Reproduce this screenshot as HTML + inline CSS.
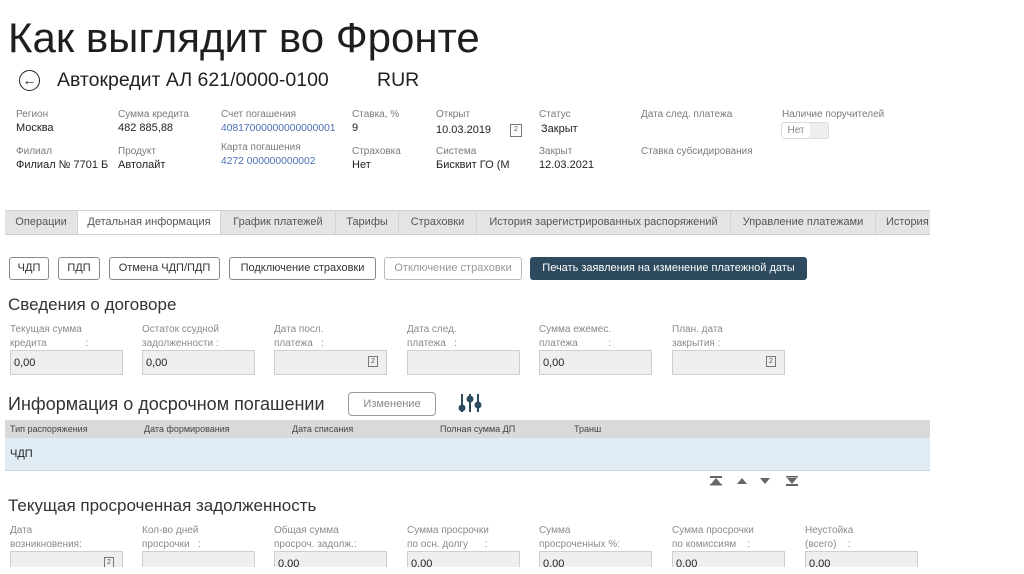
<!DOCTYPE html>
<html><head><meta charset="utf-8"><style>
body{margin:0;width:1024px;height:574px;overflow:hidden;background:#fff;font-family:"Liberation Sans",sans-serif;position:relative;color:#222}
.a{position:absolute;white-space:nowrap}
.l{font-size:10px;color:#7a7a7a}
.v{font-size:11px;color:#222}
.lk{font-size:10.3px;color:#4a6fb5}
.tabs{position:absolute;left:5px;top:210px;width:925px;height:23px;background:#e4e4e4;border-top:1px solid #cfcfcf;border-bottom:1px solid #cfcfcf;font-size:11px;color:#555}
.tab{position:absolute;top:0;height:23px;line-height:23px;border-right:1px solid #d2d2d2;text-align:center}
.btn{position:absolute;top:257px;line-height:21px;border:1px solid #8a8a8a;border-radius:3px;font-size:11px;color:#333;text-align:center;box-sizing:border-box;height:23px}
.h{font-size:17px;color:#333}
.in{position:absolute;width:113px;height:25px;background:#efefef;border:1px solid #cfcfcf;box-sizing:border-box;font-size:11px;line-height:24px;padding-left:3px}
.cal{position:absolute;right:8px;top:5px;width:10px;height:11px;border:1px solid #777;font-size:7px;line-height:10px;text-align:center;color:#555;box-sizing:border-box}
.fl{font-size:10px;color:#8a8a8a;line-height:14px}
</style></head><body>
<div class="a" style="left:8px;top:14px;font-size:42px;color:#1e1e1e">Как выглядит во Фронте</div>
<div class="a" style="left:19px;top:70px;width:19px;height:19px;border:1.5px solid #222;border-radius:50%;font-size:14px;line-height:18px;text-align:center">&#8592;</div>
<div class="a" style="left:57px;top:69px;font-size:19.5px">Автокредит АЛ 621/0000-0100</div>
<div class="a" style="left:377px;top:69px;font-size:19.5px">RUR</div>

<div class="a l" style="left:16px;top:109px">Регион</div><div class="a v" style="left:16px;top:122px">Москва</div>
<div class="a l" style="left:16px;top:146px">Филиал</div><div class="a v" style="left:16px;top:159px;width:93px;overflow:hidden">Филиал № 7701 Б</div>
<div class="a l" style="left:118px;top:109px">Сумма кредита</div><div class="a v" style="left:118px;top:122px">482 885,88</div>
<div class="a l" style="left:118px;top:146px">Продукт</div><div class="a v" style="left:118px;top:159px">Автолайт</div>
<div class="a l" style="left:221px;top:109px">Счет погашения</div><div class="a lk" style="left:221px;top:123px">40817000000000000001</div>
<div class="a l" style="left:221px;top:142px">Карта погашения</div><div class="a lk" style="left:221px;top:156px">4272 000000000002</div>
<div class="a l" style="left:352px;top:109px">Ставка, %</div><div class="a v" style="left:352px;top:122px">9</div>
<div class="a l" style="left:352px;top:146px">Страховка</div><div class="a v" style="left:352px;top:159px">Нет</div>
<div class="a l" style="left:436px;top:109px">Открыт</div><div class="a v" style="left:436px;top:124px">10.03.2019</div>
<div class="a" style="left:510px;top:124px;width:10px;height:11px;border:1px solid #777;font-size:7px;line-height:10px;text-align:center;color:#555">2</div>
<div class="a l" style="left:436px;top:146px">Система</div><div class="a v" style="left:436px;top:159px">Бисквит ГО (М</div>
<div class="a l" style="left:539px;top:109px">Статус</div><div class="a v" style="left:541px;top:123px">Закрыт</div>
<div class="a l" style="left:539px;top:146px">Закрыт</div><div class="a v" style="left:539px;top:159px">12.03.2021</div>
<div class="a l" style="left:641px;top:109px">Дата след. платежа</div>
<div class="a l" style="left:641px;top:146px">Ставка субсидирования</div>
<div class="a l" style="left:782px;top:109px">Наличие поручителей</div>
<div class="a" style="left:781px;top:122px;width:46px;height:15px;background:#eee;border:1px solid #ddd;border-radius:3px"><div style="width:28px;height:15px;background:#fff;border-radius:3px;font-size:10px;color:#888;line-height:15px;text-align:center">Нет</div></div>

<div class="tabs">
<div class="tab" style="left:0;width:72px">Операции</div>
<div class="tab" style="left:73px;width:142px;background:#fff">Детальная информация</div>
<div class="tab" style="left:216px;width:114px">График платежей</div>
<div class="tab" style="left:331px;width:62px">Тарифы</div>
<div class="tab" style="left:394px;width:77px">Страховки</div>
<div class="tab" style="left:472px;width:253px">История зарегистрированных распоряжений</div>
<div class="tab" style="left:726px;width:144px">Управление платежами</div>
<div class="tab" style="left:871px;width:54px;border:none;text-align:left;padding-left:10px;box-sizing:border-box">История</div>
</div>

<div class="btn" style="left:9px;width:40px">ЧДП</div>
<div class="btn" style="left:58px;width:42px">ПДП</div>
<div class="btn" style="left:109px;width:111px">Отмена ЧДП/ПДП</div>
<div class="btn" style="left:229px;width:147px">Подключение страховки</div>
<div class="btn" style="left:384px;width:138px;color:#999;border-color:#bbb">Отключение страховки</div>
<div class="btn" style="left:530px;width:277px;background:#2d4a5e;border-color:#2d4a5e;color:#fff;font-size:11px">Печать заявления на изменение платежной даты</div>

<div class="a h" style="left:8px;top:295px">Сведения о договоре</div>
<div class="a fl" style="left:10px;top:323px">Текущая сумма<br>кредита &nbsp;&nbsp;&nbsp;&nbsp;&nbsp;&nbsp;&nbsp;&nbsp;&nbsp;&nbsp;&nbsp;&nbsp;&nbsp;:</div>
<div class="a fl" style="left:142px;top:323px">Остаток ссудной<br>задолженности :</div>
<div class="a fl" style="left:274px;top:323px">Дата посл.<br>платежа &nbsp;&nbsp;:</div>
<div class="a fl" style="left:407px;top:323px">Дата след.<br>платежа &nbsp;&nbsp;:</div>
<div class="a fl" style="left:539px;top:323px">Сумма ежемес.<br>платежа &nbsp;&nbsp;&nbsp;&nbsp;&nbsp;&nbsp;&nbsp;&nbsp;&nbsp;&nbsp;:</div>
<div class="a fl" style="left:672px;top:323px">План. дата<br>закрытия :</div>
<div class="in" style="left:10px;top:350px">0,00</div>
<div class="in" style="left:142px;top:350px">0,00</div>
<div class="in" style="left:274px;top:350px"><div class="cal">2</div></div>
<div class="in" style="left:407px;top:350px"></div>
<div class="in" style="left:539px;top:350px">0,00</div>
<div class="in" style="left:672px;top:350px"><div class="cal">2</div></div>

<div class="a h" style="left:8px;top:394px;font-size:18px">Информация о досрочном погашении</div>
<div class="a" style="left:348px;top:392px;width:86px;height:22px;border:1px solid #999;border-radius:4px;font-size:11px;color:#888;text-align:center;line-height:22px">Изменение</div>
<svg class="a" style="left:458px;top:392px" width="26" height="24" viewBox="0 0 26 24"><g stroke="#2d4a5e" stroke-width="2" fill="#2d4a5e"><line x1="4" y1="2" x2="4" y2="20"/><line x1="12" y1="2" x2="12" y2="20"/><line x1="20" y1="2" x2="20" y2="20"/><circle cx="4" cy="16" r="2.5"/><circle cx="12" cy="7" r="2.5"/><circle cx="20" cy="13" r="2.5"/></g></svg>
<div class="a" style="left:5px;top:420px;width:925px;height:18px;background:#d9d9d9;font-size:9px;color:#444;line-height:18px">
<span class="a" style="left:5px">Тип распоряжения</span><span class="a" style="left:139px">Дата формирования</span><span class="a" style="left:287px">Дата списания</span><span class="a" style="left:435px">Полная сумма ДП</span><span class="a" style="left:569px">Транш</span></div>
<div class="a" style="left:5px;top:438px;width:925px;height:32px;background:#e1ebf4;border-bottom:1px solid #d0d8e0;font-size:11px;line-height:32px"><span style="padding-left:5px">ЧДП</span></div>
<svg class="a" style="left:708px;top:475px" width="94" height="12" viewBox="0 0 94 12"><g fill="#666"><rect x="2" y="1" width="12" height="2"/><polygon points="8,3 3,9 13,9"/><rect x="2" y="9" width="12" height="1.5"/><polygon points="34,3 29,9 39,9"/><polygon points="52,3 62,3 57,9"/><rect x="78" y="1" width="12" height="1.5"/><polygon points="79,3 89,3 84,9"/><rect x="78" y="9" width="12" height="2"/></g></svg>

<div class="a h" style="left:8px;top:496px">Текущая просроченная задолженность</div>
<div class="a fl" style="left:10px;top:524px">Дата<br>возникновения:</div>
<div class="a fl" style="left:142px;top:524px">Кол-во дней<br>просрочки &nbsp;&nbsp;:</div>
<div class="a fl" style="left:274px;top:524px">Общая сумма<br>просроч. задолж.:</div>
<div class="a fl" style="left:407px;top:524px">Сумма просрочки<br>по осн. долгу &nbsp;&nbsp;&nbsp;&nbsp;&nbsp;:</div>
<div class="a fl" style="left:539px;top:524px">Сумма<br>просроченных %:</div>
<div class="a fl" style="left:672px;top:524px">Сумма просрочки<br>по комиссиям &nbsp;&nbsp;&nbsp;:</div>
<div class="a fl" style="left:805px;top:524px">Неустойка<br>(всего) &nbsp;&nbsp;&nbsp;:</div>
<div class="a" style="left:0;top:551px;width:1024px;height:16px;overflow:hidden">
<div class="in" style="left:10px;top:0"><div class="cal">2</div></div>
<div class="in" style="left:142px;top:0"></div>
<div class="in" style="left:274px;top:0">0,00</div>
<div class="in" style="left:407px;top:0">0,00</div>
<div class="in" style="left:539px;top:0">0,00</div>
<div class="in" style="left:672px;top:0">0,00</div>
<div class="in" style="left:805px;top:0">0,00</div>
</div>
</body></html>
